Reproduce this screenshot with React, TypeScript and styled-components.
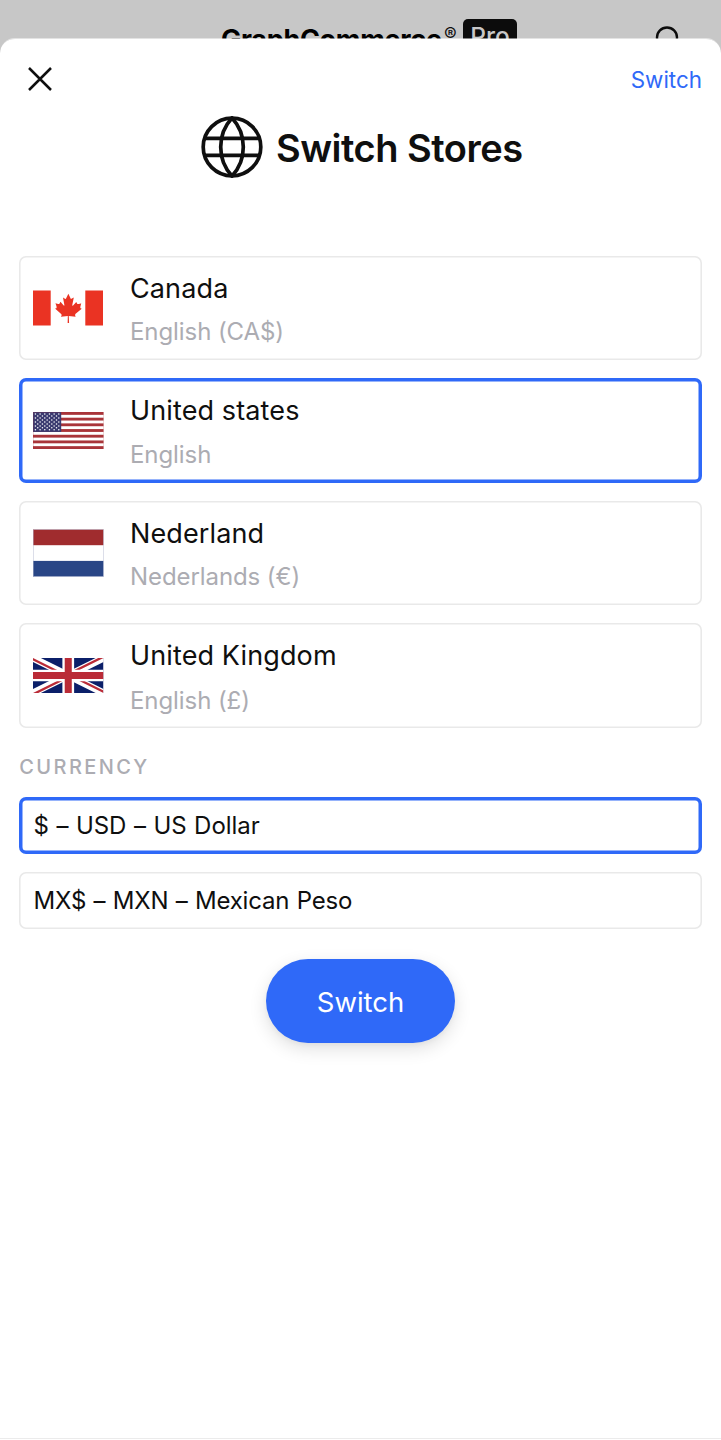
import React from 'react';
import styled, { createGlobalStyle } from 'styled-components';

const GlobalStyle = createGlobalStyle`
  * { box-sizing: border-box; }
  body {
    margin: 0;
    background: #c7c7c7;
    color: #0f0f0f;
    font-family: Inter, 'Liberation Sans', sans-serif;
    -webkit-font-smoothing: antialiased;
  }
  button { font: inherit; color: inherit; border: 0; background: none; padding: 0; }
`;

const Screen = styled.div`
  height: 1440px;
  overflow: hidden;
  display: flex;
  flex-direction: column;
`;

const SiteHeader = styled.header`
  height: 39px;
  flex: none;
  overflow: hidden;
  display: flex;
  align-items: flex-start;
  padding: 19px 41px 0 221px;
`;

const Brand = styled.span`
  font-size: 27px;
  line-height: 41px;
  font-weight: 700;
  letter-spacing: -0.3px;
  width: 223px;
  white-space: nowrap;
  color: #000;
`;

const Registered = styled.span`
  font-size: 19px;
  line-height: 31px;
  width: 19px;
`;

const ProBadge = styled.span`
  width: 54px;
  height: 36px;
  border-radius: 5px;
  background: #0c0c0c;
  color: #c7c7c7;
  font-size: 24.5px;
  line-height: 35px;
  font-weight: 500;
  text-align: center;
`;

const SearchIcon = styled.svg`
  margin: 5px 0 0 auto;
  flex: none;
`;

const Sheet = styled.main`
  flex: none;
  height: 1402px;
  margin-top: -1px;
  padding: 0 19px;
  display: flex;
  flex-direction: column;
  background: #fff;
  background-clip: padding-box;
  border-top: 1px solid rgba(255, 255, 255, 0.5);
  border-radius: 15px 15px 0 0;
`;

const Toolbar = styled.div`
  height: 80px;
  display: flex;
  align-items: center;
  justify-content: space-between;
  padding: 0 0 0 9px;
`;

const TextAction = styled.button`
  color: #2f69f8;
  font-size: 22.4px;
  line-height: 30px;
  padding-top: 2px;
`;

const Heading = styled.h1`
  margin: -3px 0 0;
  height: 62px;
  padding-left: 2.5px;
  display: flex;
  align-items: center;
  justify-content: center;
  gap: 13px;
  font-size: 38px;
  line-height: 62px;
  font-weight: 600;
  letter-spacing: -0.5px;
  white-space: nowrap;
  svg { flex: none; }
  span { padding-top: 1px; }
`;

const StoreList = styled.div`
  margin-top: 77.7px;
  display: flex;
  flex-direction: column;
  gap: 17.8px;
`;

const Option = styled.button<{ $selected?: boolean }>`
  display: flex;
  align-items: center;
  width: 100%;
  text-align: left;
  border-radius: 7px;
  box-shadow: inset 0 0 0 ${p => (p.$selected ? '3.5px #2f69f8' : '1.6px #e9e9e9')};
`;

const StoreOption = styled(Option)`
  height: 104.7px;
  padding-left: 14px;
`;

const FlagSlot = styled.span`
  width: 97px;
  flex: none;
`;

const StoreText = styled.span`
  display: flex;
  flex-direction: column;
  white-space: nowrap;
  padding-top: 3.8px;
`;

const StoreName = styled.span`
  font-size: 27px;
  line-height: 44px;
  letter-spacing: 0.12px;
`;

const StoreLocale = styled.span<{ $drop?: number }>`
  font-size: 24px;
  line-height: 42px;
  letter-spacing: -0.08px;
  color: #acacb2;
  padding-top: ${p => p.$drop ?? 0}px;
  margin-bottom: -${p => p.$drop ?? 0}px;
`;

const SectionLabel = styled.h2`
  margin: 22px 0 0;
  padding-left: 0.3px;
  font-size: 20px;
  line-height: 34px;
  font-weight: 450;
  letter-spacing: 2.4px;
  text-transform: uppercase;
  color: #acacb2;
`;

const CurrencyList = styled.div`
  margin-top: 13.1px;
  display: flex;
  flex-direction: column;
  gap: 18px;
`;

const CurrencyOption = styled(Option)<{ $tracking: number }>`
  height: 57px;
  padding-left: 14.5px;
  font-size: 24px;
  word-spacing: 0.8px;
  letter-spacing: ${p => p.$tracking}px;
`;

const SubmitButton = styled.button`
  align-self: center;
  margin-top: 30px;
  width: 189px;
  height: 84px;
  flex: none;
  border-radius: 42px;
  background: #2f69f8;
  color: #fff;
  font-size: 27.5px;
  padding-top: 3px;
  box-shadow: 0 6px 18px rgba(0, 0, 0, 0.12), 0 2px 5px rgba(0, 0, 0, 0.04);
`;

const SheetFooter = styled.footer`
  height: 2px;
  margin: auto -19px 0;
  border-top: 1px solid #ebebeb;
`;

const FlagSvg = styled.svg`
  display: block;
`;

const CanadaFlag = () => (
  <FlagSvg width="70" height="36" viewBox="0 0 70 36">
    <path fill="#ea3323" d="M0 .4h17.7v35.2H0zM52.3 .4H70v35.2H52.3z" />
    <path
      fill="#ea3323"
      transform="translate(2.4 -6.1) scale(.1045)"
      d="M201 232l-13.3 4.4 61.4 54c4.7 13.7-1.6 17.8-5.6 25l66.6-8.4-1.6 67 13.9-.3-3.1-66.6 66.7 8c-4.1-8.7-7.8-13.3-4-27.2l61.3-51-10.7-4c-8.8-6.8 3.8-32.6 5.6-48.9 0 0-35.7 12.3-38 5.8l-9.2-17.5-32.6 35.8c-3.5.9-5-.5-5.9-3.5l15-74.8-23.8 13.4c-2 .9-4 .1-5.2-2.2l-23-46-23.6 47.8c-1.8 1.7-3.6 1.9-5 .7L264 130.8l13.7 74.1c-1.1 3-3.7 3.8-6.7 2.2l-31.2-35.3c-4 6.5-6.8 17.1-12.2 19.5-5.4 2.3-23.5-4.5-35.6-7 4.2 14.8 17 39.6 9 47.7z"
    />
  </FlagSvg>
);

const stripe = 37 / 13;
const UsFlag = () => (
  <FlagSvg width="70.5" height="37" viewBox="0 0 70 37" preserveAspectRatio="none">
    <rect width="70" height="37" fill="#fff" />
    {[0, 2, 4, 6, 8, 10, 12].map(i => (
      <rect key={i} y={i * stripe} width="70" height={stripe} fill="#a93439" />
    ))}
    <rect width="28" height={stripe * 7} fill="#3b3a70" />
    {Array.from({ length: 9 }, (_, row) =>
      Array.from({ length: row % 2 ? 5 : 6 }, (_, col) => (
        <circle
          key={`${row}-${col}`}
          cx={2.4 + col * 4.65 + (row % 2 ? 2.32 : 0)}
          cy={2 + row * 1.98}
          r="0.75"
          fill="#fff"
        />
      ))
    )}
    <rect x=".25" y=".25" width="69.5" height="36.5" fill="none" stroke="#a93439" strokeOpacity=".4" strokeWidth=".5" />
  </FlagSvg>
);

const NetherlandsFlag = () => (
  <FlagSvg width="71" height="48" viewBox="0 0 71 48">
    <rect width="71" height="48" fill="#fff" />
    <rect y=".4" width="70.5" height="15.8" fill="#a02c2e" />
    <rect y="31.9" width="70.5" height="15.7" fill="#294686" />
    <rect x=".5" y=".5" width="70" height="47" fill="none" stroke="#b9bdd4" strokeOpacity=".5" />
  </FlagSvg>
);

const UkFlag = () => (
  <FlagSvg width="70.5" height="35" viewBox="0 0 60 30" preserveAspectRatio="none">
    <clipPath id="uk-frame"><path d="M0 0h60v30H0z" /></clipPath>
    <clipPath id="uk-saltire"><path d="M30 15h30v15zv15H0zH0V0zV0h30z" /></clipPath>
    <g clipPath="url(#uk-frame)">
      <path d="M0 0h60v30H0z" fill="#0b1f69" />
      <path d="M0 0l60 30M60 0L0 30" stroke="#fff" strokeWidth="6" />
      <path d="M0 0l60 30M60 0L0 30" clipPath="url(#uk-saltire)" stroke="#ba2b37" strokeWidth="4" />
      <path d="M30 0v30M0 15h60" stroke="#fff" strokeWidth="10" />
      <path d="M30 0v30M0 15h60" stroke="#ba2b37" strokeWidth="6" />
    </g>
  </FlagSvg>
);

const stores = [
  { name: 'Canada', locale: 'English (CA$)', Flag: CanadaFlag },
  { name: 'United states', locale: 'English', Flag: UsFlag, selected: true, drop: 1 },
  { name: 'Nederland', locale: 'Nederlands (€)', Flag: NetherlandsFlag },
  { name: 'United Kingdom', locale: 'English (£)', Flag: UkFlag, drop: 1.5 },
];

const currencies = [
  { label: '$ – USD – US Dollar', tracking: -0.03, selected: true },
  { label: 'MX$ – MXN – Mexican Peso', tracking: -0.18 },
];

export default function App() {
  return (
    <Screen>
      <GlobalStyle />
      <SiteHeader>
        <Brand>GraphCommerce</Brand>
        <Registered>®</Registered>
        <ProBadge>Pro</ProBadge>
        <SearchIcon width="26" height="26" viewBox="0 0 26 26" fill="none" stroke="#0c0c0c" strokeWidth="2.4">
          <circle cx="13" cy="13.5" r="10" />
          <path d="M20 20.5l5 5" />
        </SearchIcon>
      </SiteHeader>
      <Sheet>
        <Toolbar>
          <button aria-label="Close">
            <svg width="24" height="24" viewBox="0 0 24 24" stroke="#0f0f0f" strokeWidth="2.5" display="block">
              <path d="M1 1l22 22M23 1L1 23" />
            </svg>
          </button>
          <TextAction>Switch</TextAction>
        </Toolbar>
        <Heading>
          <svg width="62" height="62" viewBox="0 0 62 62" fill="none" stroke="#0f0f0f" strokeWidth="3.7">
            <circle cx="31" cy="31" r="28.8" />
            <path d="M31 2C23.5 10 19.7 20 19.7 31S23.5 52 31 60C38.5 52 42.3 42 42.3 31S38.5 10 31 2z" />
            <path d="M3.5 22.4h55M3.5 39.4h55" />
          </svg>
          <span>Switch Stores</span>
        </Heading>
        <StoreList>
          {stores.map(({ name, locale, Flag, selected, drop }) => (
            <StoreOption key={name} $selected={selected}>
              <FlagSlot><Flag /></FlagSlot>
              <StoreText>
                <StoreName>{name}</StoreName>
                <StoreLocale $drop={drop}>{locale}</StoreLocale>
              </StoreText>
            </StoreOption>
          ))}
        </StoreList>
        <SectionLabel>Currency</SectionLabel>
        <CurrencyList>
          {currencies.map(({ label, selected, tracking }) => (
            <CurrencyOption key={label} $selected={selected} $tracking={tracking}>{label}</CurrencyOption>
          ))}
        </CurrencyList>
        <SubmitButton>Switch</SubmitButton>
        <SheetFooter />
      </Sheet>
    </Screen>
  );
}
